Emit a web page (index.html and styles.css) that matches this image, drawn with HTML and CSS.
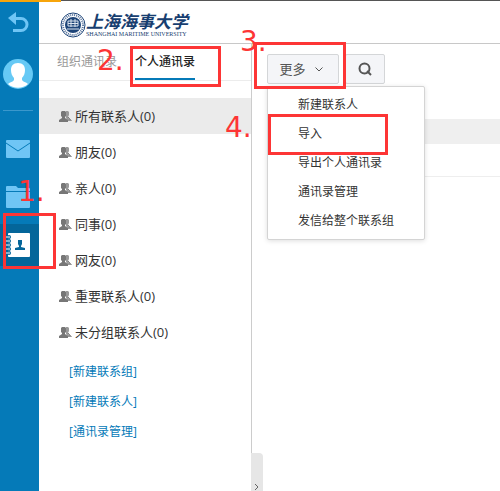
FILE: index.html
```html
<!DOCTYPE html>
<html lang="zh-CN">
<head>
<meta charset="utf-8">
<title>通讯录</title>
<link rel="stylesheet" href="styles.css">
</head>
<body>
<svg width="0" height="0" class="defs" aria-hidden="true">
  <symbol id="people" viewBox="0 0 13 12">
    <path fill="#999" d="M7 1h2l1 1v3L9 7v1l2 1 1 2H9L7 8z"/>
    <path fill="#777" d="M3 1h3l1 1v4L6 7v1l3 2v2H0v-2l3-2V7L2 6V2z"/>
    <path fill="none" stroke="#777" d="m9 7 3.500 4"/>
  </symbol>
</svg>
<div class="strip"></div>
<div class="app">
  <nav class="rail" aria-label="主导航">
    <a href="#" class="back" aria-label="返回"><svg width="22" height="22" viewBox="0 0 22 22"><path d="M8 0 0 6l8 7z" fill="#6fc5f5"/><path d="M6 6.500h7a6 6 0 0 1 0 12H5" fill="none" stroke="#6fc5f5" stroke-width="3"/></svg></a>
    <a href="#" class="avatar" aria-label="头像"><svg width="30" height="30" viewBox="0 0 30 30"><circle cx="15" cy="15" r="15" fill="#66c9f5"/><path d="M15 4c-5 0-7 3-7 7 0 3 1 6 3 8v2c-1 2-4 2-6 4a15 15 0 0 0 20 0c-2-2-5-2-6-4v-2c2-2 3-5 3-8 0-4-2-7-7-7z" fill="#fff"/></svg></a>
    <hr class="rule">
    <a href="#" class="tile" aria-label="邮件"><svg width="24" height="18" viewBox="0 0 24 18"><rect width="24" height="18" rx="1" fill="#6fc5f5"/><path d="m0 3 12 8 12-8" fill="none" stroke="#057ab8"/></svg></a>
    <a href="#" class="tile" aria-label="文件夹"><svg width="24" height="22" viewBox="0 0 24 22"><path d="M0 1q0-1 1-1h9l2 2h11q1 0 1 1v18q0 1-1 1H1q-1 0-1-1z" fill="#6fc5f5"/><path d="M0 5.500h24" stroke="#057ab8"/></svg></a>
    <a href="#" class="tile current" aria-label="通讯录"><svg width="26" height="24" viewBox="0 0 26 24"><rect x="3" width="22" height="24" rx="1" fill="#fff"/><g fill="#04669a"><circle cx="4" cy="4" r="2"/><circle cx="4" cy="8" r="2"/><circle cx="4" cy="12" r="2"/><circle cx="4" cy="16" r="2"/><circle cx="4" cy="20" r="2"/></g><path d="M1 4h4M1 8h4M1 12h4M1 16h4M1 20h4" stroke="#fff"/><path d="M13 7h4v4l-1 2v1l4 1v2H10v-2l4-1v-1l-1-2z" fill="#04669a"/></svg></a>
  </nav>
  <div class="body">
    <header class="header">
      <svg class="seal" width="26" height="26" viewBox="0 0 26 26"><circle cx="13" cy="13" r="12" fill="#fff" stroke="#1d4478"/><circle cx="13" cy="13" r="10" fill="none" stroke="#53709a" stroke-width="2" stroke-dasharray="1 1"/><circle cx="13" cy="13" r="8" fill="#1d4478"/><path d="M8 9h10v5H8zM8 11.500h10M11 7v8M15 7v8M7 17h12" fill="none" stroke="#dde5ef"/></svg>
      <div class="brand"><span class="brand-cn">上海海事大学</span><span class="brand-en">SHANGHAI MARITIME UNIVERSITY</span></div>
    </header>
    <div class="columns">
      <aside class="side">
        <div class="tabs"><a href="#" class="tab">组织通讯录</a><a href="#" class="tab active">个人通讯录</a></div>
        <ul class="groups">
          <li class="group selected"><svg class="people"><use href="#people"/></svg>所有联系人(0)</li>
          <li class="group"><svg class="people"><use href="#people"/></svg>朋友(0)</li>
          <li class="group"><svg class="people"><use href="#people"/></svg>亲人(0)</li>
          <li class="group"><svg class="people"><use href="#people"/></svg>同事(0)</li>
          <li class="group"><svg class="people"><use href="#people"/></svg>网友(0)</li>
          <li class="group"><svg class="people"><use href="#people"/></svg>重要联系人(0)</li>
          <li class="group"><svg class="people"><use href="#people"/></svg>未分组联系人(0)</li>
        </ul>
        <div class="links"><a href="#">[新建联系组]</a><a href="#">[新建联系人]</a><a href="#">[通讯录管理]</a></div>
        <button class="handle" aria-label="收起"><svg width="4" height="6" viewBox="0 0 4 6"><path d="m0 0 3 3-3 3" fill="none" stroke="#666"/></svg></button>
      </aside>
      <main class="main">
        <div class="toolbar">
          <div class="more">
            <button class="btn btn-more">更多<svg width="8" height="5" viewBox="0 0 8 5"><path d="m.5.500 3.500 3.500L7.500.500" fill="none" stroke="#555"/></svg></button>
            <div class="menu">
              <a href="#">新建联系人</a><a href="#">导入</a><a href="#">导出个人通讯录</a><a href="#">通讯录管理</a><a href="#">发信给整个联系组</a>
            </div>
          </div>
          <button class="btn btn-search" aria-label="搜索"><svg width="14" height="14" viewBox="0 0 14 14"><circle cx="6.500" cy="6.500" r="5" fill="none" stroke="#555" stroke-width="2"/><path d="m9 9 4 4" stroke="#555" stroke-width="2"/></svg></button>
        </div>
        <div class="thead"></div>
        <div class="trow"></div>
      </main>
    </div>
  </div>
</div>
<div class="mark box1"></div><div class="mark box2"></div><div class="mark box3"></div><div class="mark box4"></div>
<span class="num num1">1.</span><span class="num num2">2.</span><span class="num num3">3.</span><span class="num num4">4.</span>
</body>
</html>
```
FILE: styles.css
```css
* { box-sizing: border-box; }
body {
  margin: 0;
  min-height: 100vh;
  display: flex;
  flex-direction: column;
  background: #fff;
  color: #333;
  font: 12px/18px "Open Sans", "Noto Sans CJK SC", sans-serif;
}
a { color: inherit; text-decoration: none; }
svg { display: block; }
button { font: inherit; color: inherit; padding: 0; }
.defs { position: absolute; }
.strip {
  height: 2px;
  background:
    linear-gradient(#f7a50b, #f7a50b) 0 0 / 61px 2px no-repeat,
    linear-gradient(#555, #555) 0 0 / 100% 1px no-repeat;
}
.app { display: flex; flex: 1; }
.rail { width: 39px; background: #057ab8; display: flex; flex-direction: column; }
.back { padding: 10px 8px 0; }
.avatar { padding: 25px 3px 0; }
.rule { width: 30px; height: 1px; border: 0; margin: 21px 3px 17px; background: #3b98cc; }
.tile { height: 42px; margin-bottom: 6px; display: flex; align-items: center; padding-left: 6px; }
.tile.current { background: #04669a; padding-left: 5px; }
.body { flex: 1; display: flex; flex-direction: column; min-width: 0; }
.header {
  height: 42px;
  border-bottom: 1px solid #c8c8c8;
  padding: 10px 0 0 21px;
  display: flex;
}
.brand { display: flex; flex-direction: column; color: #173e70; white-space: nowrap; }
.brand-cn { font: italic 700 17px/18px "Noto Sans CJK SC", sans-serif; }
.brand-en { font: 6px/8px "Liberation Serif", serif; }
.columns { flex: 1; display: flex; }
.side { position: relative; width: 213px; border-right: 1px solid #ccc; }
.tabs { height: 37px; border-bottom: 1px solid #ececec; padding-left: 18px; display: flex; gap: 18px; }
.tab { height: 36px; line-height: 35px; color: #999; }
.tab.active { color: #222; font-weight: 500; border-bottom: 2px solid #057ab8; }
.groups { list-style: none; margin: 17px 0 7px; padding: 0; }
.group { height: 36px; padding-left: 20px; display: flex; align-items: center; gap: 3px; font-size: 13px; }
.selected { background: #ebebeb; }
.people { width: 13px; height: 12px; }
.links { display: flex; flex-direction: column; padding-left: 30px; color: #057ab8; line-height: 30px; }
.handle {
  position: absolute;
  left: 212px;
  bottom: 0;
  width: 12px;
  height: 38px;
  border: 0;
  border-radius: 0 4px 0 0;
  background: #e6e6e6;
  padding: 30px 0 0 4px;
}
.main { flex: 1; padding: 10px 0 0 15px; }
.toolbar { display: flex; gap: 6px; }
.more { position: relative; }
.btn {
  height: 30px;
  background: #f4f5f8;
  border: 1px solid #d4d6d8;
  border-radius: 2px;
  color: #555;
  display: flex;
  align-items: center;
  justify-content: center;
}
.btn-more { width: 72px; gap: 9px; font-size: 13px; padding-right: 4px; }
.btn-search { width: 40px; }
.menu {
  position: absolute;
  top: 32px;
  left: 0;
  width: 158px;
  padding: 3px 0 4px;
  border: 1px solid #d4d4d4;
  border-radius: 2px;
  background: #fff;
  box-shadow: 0 1px 5px #0002;
  display: flex;
  flex-direction: column;
  line-height: 29px;
}
.menu a { padding-left: 30px; }
.thead { height: 25px; margin-top: 35px; background: #efefef; }
.trow { height: 33px; border-bottom: 1px solid #eee; }
.mark { position: absolute; border: 3px solid #fd3535; }
.box1 { left: 3px; top: 213px; width: 53px; height: 56px; }
.box2 { left: 130px; top: 46px; width: 91px; height: 41px; }
.box3 { left: 254px; top: 42px; width: 92px; height: 47px; }
.box4 { left: 268px; top: 114px; width: 120px; height: 41px; }
.num { position: absolute; color: #fd3535; font: 28px/32px "DejaVu Sans", sans-serif; }
.num1 { left: 18px; top: 176px; }
.num2 { left: 97px; top: 45px; }
.num3 { left: 240px; top: 26px; }
.num4 { left: 225px; top: 112px; }
```
